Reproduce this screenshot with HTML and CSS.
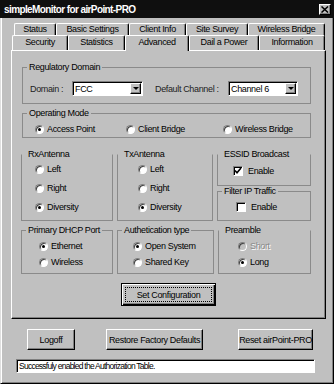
FILE: index.html
```html
<!DOCTYPE html>
<html lang="en">
  <head>
    <meta charset="UTF-8" />
    <title>simpleMonitor for airPoint-PRO</title>
    <meta name="viewport" content="width=device-width, initial-scale=1.0" />
    <link rel="stylesheet" href="styles.css">
  </head>
  <body>
    <div class="window">
      <div class="titlebar">
        <span class="title">simpleMonitor for airPoint-PRO</span>
        <span class="close">
          <svg width="8" height="7" viewBox="0 0 8 7"><path d="M0.5 0.5 L7 6.5 M7 0.5 L0.5 6.5" stroke="#000" stroke-width="1.5"/></svg>
        </span>
      </div>

      <div class="frame">
        <div class="tabs">
          <div class="tabrow back">
            <div class="tab t-status">Status</div>
            <div class="tab t-basic">Basic Settings</div>
            <div class="tab t-client">Client Info</div>
            <div class="tab t-survey">Site Survey</div>
            <div class="tab t-wbridge">Wireless Bridge</div>
          </div>
          <div class="tabrow front">
            <div class="tab t-security">Security</div>
            <div class="tab t-stats">Statistics</div>
            <div class="tab t-advanced active">Advanced</div>
            <div class="tab t-power">Dail a Power</div>
            <div class="tab t-info">Information</div>
          </div>
        </div>

        <div class="panel">
          <fieldset class="group wide regulatory">
            <legend>Regulatory Domain</legend>
            <div class="gbody field-row">
              <span class="lbl lbl-domain">Domain :</span>
              <div class="select sel-domain"><span>FCC</span><span class="drop"></span></div>
              <span class="lbl lbl-channel">Default Channel :</span>
              <div class="select sel-channel"><span>Channel 6</span><span class="drop"></span></div>
            </div>
          </fieldset>

          <fieldset class="group wide opmode">
            <legend>Operating Mode</legend>
            <div class="gbody opt-row">
              <label class="opt op-ap"><span class="radio on"></span>Access Point</label>
              <label class="opt op-cb"><span class="radio"></span>Client Bridge</label>
              <label class="opt"><span class="radio"></span>Wireless Bridge</label>
            </div>
          </fieldset>

          <div class="group-row row-antenna">
            <fieldset class="group notop rx">
              <legend>RxAntenna</legend>
              <div class="gbody opt-col">
                <label class="opt"><span class="radio"></span>Left</label>
                <label class="opt"><span class="radio"></span>Right</label>
                <label class="opt"><span class="radio on"></span>Diversity</label>
              </div>
            </fieldset>
            <fieldset class="group notop tx">
              <legend>TxAntenna</legend>
              <div class="gbody opt-col">
                <label class="opt"><span class="radio"></span>Left</label>
                <label class="opt"><span class="radio"></span>Right</label>
                <label class="opt"><span class="radio on"></span>Diversity</label>
              </div>
            </fieldset>
            <div class="side-col">
              <fieldset class="group notop essid">
                <legend>ESSID Broadcast</legend>
                <div class="gbody">
                  <label class="opt"><span class="check on">
                    <svg width="8" height="8" viewBox="0 0 8 8"><path d="M1 3.5 L3 5.8 L7 1" stroke="#000" stroke-width="1.6" fill="none"/></svg>
                  </span>Enable</label>
                </div>
              </fieldset>
              <fieldset class="group filter">
                <legend>Filter IP Traffic</legend>
                <div class="gbody">
                  <label class="opt"><span class="check"></span>Enable</label>
                </div>
              </fieldset>
            </div>
          </div>

          <div class="group-row row-misc">
            <fieldset class="group dhcp">
              <legend>Primary DHCP Port</legend>
              <div class="gbody opt-col tight">
                <label class="opt"><span class="radio on"></span>Ethernet</label>
                <label class="opt"><span class="radio"></span>Wireless</label>
              </div>
            </fieldset>
            <fieldset class="group auth">
              <legend>Authetication type</legend>
              <div class="gbody opt-col tight">
                <label class="opt"><span class="radio on"></span>Open System</label>
                <label class="opt"><span class="radio"></span>Shared Key</label>
              </div>
            </fieldset>
            <fieldset class="group notop preamble">
              <legend>Preamble</legend>
              <div class="gbody opt-col tight">
                <label class="opt disabled"><span class="radio"></span>Short</label>
                <label class="opt"><span class="radio on"></span>Long</label>
              </div>
            </fieldset>
          </div>

          <button class="btn default set-config"><span class="focus">Set Configuration</span></button>
        </div>

        <div class="actions">
          <button class="btn b-logoff">Logoff</button>
          <button class="btn b-restore">Restore Factory Defaults</button>
          <button class="btn b-reset">Reset airPoint-PRO</button>
        </div>

        <div class="status">Successfuly enabled the Authorization Table.</div>
      </div>
    </div>
  </body>
</html>
```

FILE: styles.css
```css
* {
  box-sizing: border-box;
}

body {
  margin: 0;
  font-family: "Liberation Sans", Arial, sans-serif;
  font-size: 9px;
  letter-spacing: -0.35px;
  color: #000;
  background: #c0c0c0;
}

.window {
  width: 334px;
  height: 384px;
  background: #c0c0c0;
  display: flex;
  flex-direction: column;
}

.titlebar {
  height: 18px;
  background: #0f0f0f;
  color: #fff;
  display: flex;
  align-items: center;
  padding: 0 3px 0 4px;
}

.title {
  font-weight: bold;
  font-size: 10px;
  letter-spacing: -0.6px;
  flex: 1;
}

.close {
  width: 12px;
  height: 11px;
  background: #c0c0c0;
  border: 1px solid;
  border-color: #fff #000 #000 #fff;
  box-shadow: inset -1px -1px #808080;
  display: flex;
  align-items: center;
  justify-content: center;
}

.frame {
  flex: 1;
  border-left: 1px solid #dfdfdf;
  border-right: 1px solid #000;
  border-bottom: 1px solid #000;
  box-shadow: inset 1px 0 #fff, inset -1px -1px #808080;
  padding: 5px 0 0 1px;
}

/* tabs */
.tabrow {
  display: flex;
}

.tabrow.back {
  margin-left: 12px;
  height: 12px;
}

.tabrow.front {
  margin-left: 10px;
  height: 15px;
  position: relative;
  z-index: 1;
}

.tab {
  background: #c0c0c0;
  border: 1px solid;
  border-color: #fff #000 transparent #fff;
  border-bottom: none;
  border-radius: 2px 2px 0 0;
  box-shadow: inset -1px 0 #808080;
  text-align: center;
  white-space: nowrap;
}

.back .tab {
  height: 13px;
  line-height: 11px;
}

.front .tab {
  height: 15px;
  line-height: 13px;
}

.front .tab.active {
  height: 16px;
}

.t-status { width: 42px; }
.t-basic { width: 73px; }
.t-client { width: 57px; }
.t-survey { width: 62px; }
.t-wbridge { width: 77px; }
.t-security { width: 56px; }
.t-stats { width: 57px; }
.t-advanced { width: 64px; }
.t-power { width: 70px; }
.t-info { width: 66px; }

/* content panel */
.panel {
  margin-left: 9px;
  width: 315px;
  height: 269px;
  border: 1px solid;
  border-color: #fff #000 #000 #fff;
  box-shadow: inset -1px -1px #808080;
  padding: 11px 0 0 9px;
  display: flex;
  flex-direction: column;
  align-items: flex-start;
}

.group {
  margin: 0;
  padding: 0;
  min-width: 0;
  border: 1px solid #8a8a8a;
}

.group legend {
  margin-left: 4px;
  padding: 0 2px;
  line-height: 10px;
  white-space: nowrap;
}

.group.notop {
  border-top-color: transparent;
}

.group.wide {
  margin-left: 1px;
  width: 289px;
}

.regulatory {
  height: 42px;
}

.regulatory .gbody {
  padding: 9px 0 0 7px;
}

.opmode {
  margin-top: 4px;
  height: 30px;
}

.opmode .gbody {
  padding: 6px 0 0 12px;
}

.field-row {
  display: flex;
  align-items: center;
  white-space: nowrap;
}

.lbl {
  color: #222;
}

.lbl-domain { width: 42px; }
.lbl-channel { width: 73px; margin-left: 12px; }

.select {
  height: 15px;
  background: #fff;
  border: 1px solid;
  border-color: #808080 #fff #fff #808080;
  box-shadow: inset 1px 1px #000;
  display: flex;
  align-items: center;
  justify-content: space-between;
  padding: 1px 1px 1px 2px;
}

.sel-domain { width: 71px; }
.sel-channel { width: 70px; }

.drop {
  width: 11px;
  height: 11px;
  background: #c0c0c0;
  border: 1px solid;
  border-color: #fff #000 #000 #fff;
  box-shadow: inset -1px -1px #808080;
  display: flex;
  align-items: center;
  justify-content: center;
}

.drop::after {
  content: "";
  border-left: 3px solid transparent;
  border-right: 3px solid transparent;
  border-top: 3px solid #000;
}

.opt-row {
  display: flex;
}

.op-ap { width: 91px; }
.op-cb { width: 97px; }

.opt {
  display: flex;
  align-items: center;
  gap: 3px;
  height: 10px;
  white-space: nowrap;
}

.opt.disabled {
  color: #8a8a8a;
  text-shadow: 1px 1px #fff;
}

.radio {
  width: 9px;
  height: 9px;
  flex: none;
  border-radius: 50%;
  background: #fff;
  border: 1px solid;
  border-color: #808080 #fff #fff #808080;
  box-shadow: inset 1px 1px #404040;
  display: flex;
  align-items: center;
  justify-content: center;
}

.disabled .radio {
  background: #c0c0c0;
}

.radio.on::after {
  content: "";
  width: 3px;
  height: 3px;
  border-radius: 50%;
  background: #000;
}

.check {
  width: 10px;
  height: 10px;
  flex: none;
  background: #fff;
  border: 1px solid;
  border-color: #808080 #fff #fff #808080;
  box-shadow: inset 1px 1px #000;
  display: flex;
  align-items: center;
  justify-content: center;
  margin-right: 2px;
}

.opt-col {
  display: flex;
  flex-direction: column;
  gap: 9px;
}

.opt-col.tight {
  gap: 6px;
}

.group-row {
  display: flex;
  gap: 4px;
}

.row-antenna {
  margin-top: 11px;
  height: 72px;
}

.rx {
  width: 92px;
}

.rx .gbody {
  padding: 5px 0 0 13px;
}

.tx {
  width: 96px;
}

.tx .gbody {
  padding: 5px 0 0 20px;
}

.side-col {
  width: 94px;
  display: flex;
  flex-direction: column;
}

.essid {
  height: 37px;
}

.essid .gbody {
  padding: 7px 0 0 15px;
}

.filter {
  flex: 1;
}

.filter .gbody {
  padding: 6px 0 0 18px;
}

.row-misc {
  margin-top: 4px;
  height: 49px;
}

.dhcp {
  width: 92px;
}

.dhcp .gbody {
  padding: 6px 0 0 17px;
}

.auth {
  width: 97px;
}

.auth .gbody {
  padding: 6px 0 0 15px;
}

.preamble {
  width: 93px;
}

.preamble .gbody {
  padding: 6px 0 0 19px;
}

/* buttons */
.btn {
  font: inherit;
  letter-spacing: inherit;
  color: #000;
  background: #c0c0c0;
  border: 1px solid;
  border-color: #fff #000 #000 #fff;
  box-shadow: inset -1px -1px #808080;
  padding: 0;
  height: 21px;
  white-space: nowrap;
}

.btn.default {
  border-color: #000;
  box-shadow: inset 1px 1px #fff, inset -1px -1px #000, inset -2px -2px #808080;
  padding: 3px;
}

.set-config {
  margin: 9px 0 0 100px;
  width: 95px;
  height: 23px;
}

.focus {
  display: flex;
  align-items: center;
  justify-content: center;
  height: 100%;
  border: 1px dotted #000;
}

.actions {
  display: flex;
  margin: 10px 0 0 25px;
}

.b-logoff { width: 48px; }
.b-restore { width: 97px; margin-left: 31px; }
.b-reset { width: 75px; margin-left: 35px; }

.status {
  margin: 9px 0 0 14px;
  width: 299px;
  height: 14px;
  background: #fff;
  border: 1px solid;
  border-color: #808080 #fff #fff #808080;
  box-shadow: inset 1px 1px #000;
  padding: 0 2px;
  font-size: 8.5px;
  letter-spacing: -0.75px;
  line-height: 12px;
  white-space: nowrap;
}
```
